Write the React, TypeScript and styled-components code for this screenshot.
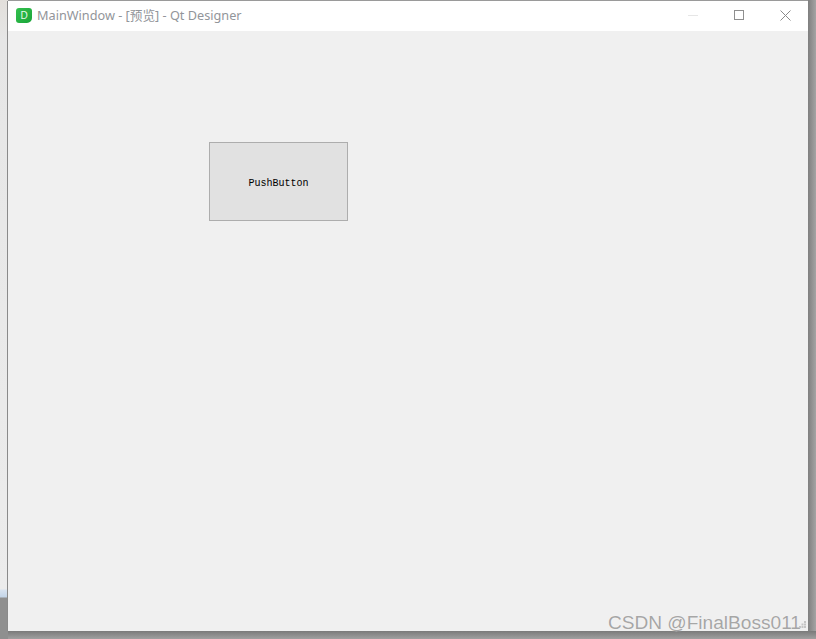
import React from 'react';
import styled, { createGlobalStyle } from 'styled-components';

const GlobalStyle = createGlobalStyle`
    html, body {
        margin: 0;
        padding: 0;
        width: 816px;
        height: 639px;
        overflow: hidden;
    }
`;

const Desktop = styled.div`
    position: relative;
    width: 816px;
    height: 639px;
    box-sizing: border-box;
    padding: 1px 8px 8px 8px;
    background: linear-gradient(
        to bottom,
        #e2dfdb 0,
        #e6e6e6 40px,
        #ececec 589px,
        #d8e3f0 590px,
        #c4d5e8 597px,
        #8f8f8f 598px,
        #8f8f8f 100%
    );
`;

const RightShade = styled.div`
    position: absolute;
    top: 0;
    right: 0;
    bottom: 0;
    width: 8px;
    background: linear-gradient(to right, #7f7f7f, #a4a4a4);
`;

const TopShade = styled.div`
    position: absolute;
    top: 0;
    left: 8px;
    right: 8px;
    height: 1px;
    background: #9a9a9a;
`;

const BottomShade = styled.div`
    position: absolute;
    left: 8px;
    right: 0;
    bottom: 0;
    height: 8px;
    background: linear-gradient(to bottom, #7a7a7a, #a0a0a0);
`;

const Window = styled.div`
    position: relative;
    z-index: 1;
    display: flex;
    flex-direction: column;
    width: 800px;
    height: 630px;
    background: #f0f0f0;
    box-shadow: -1px 0 0 #8a8a8a;
`;

const TitleBar = styled.div`
    display: flex;
    align-items: center;
    flex: 0 0 30px;
    padding-bottom: 2px;
    box-sizing: border-box;
    background: #ffffff;
`;

const AppIcon = styled.div`
    display: flex;
    align-items: center;
    justify-content: center;
    width: 16px;
    height: 15px;
    margin: 0 5px 0 8px;
    border-radius: 3px 3px 5px 3px;
    background: linear-gradient(135deg, #34c04e, #1aa53a);
    color: #e8f8ea;
    font: 10px "Liberation Sans", sans-serif;
`;

const Title = styled.div`
    flex: 1;
    margin-bottom: 1px;
    color: #92959a;
    font: 12.7px "Noto Sans", "Noto Sans CJK SC", sans-serif;
    white-space: nowrap;
`;

const Controls = styled.div`
    display: flex;
    align-items: center;
`;

const ControlButton = styled.div`
    display: flex;
    align-items: center;
    justify-content: center;
    width: 46px;
    height: 28px;
`;

const Content = styled.div`
    flex: 1;
    padding: 111px 0 0 201px;
`;

const PushButton = styled.button`
    display: flex;
    align-items: center;
    justify-content: center;
    width: 139px;
    height: 79px;
    box-sizing: border-box;
    padding: 3px 0 0;
    border: 1px solid #adadad;
    background: #e1e1e1;
    color: #000000;
    font: 10px "Liberation Mono", "DejaVu Sans Mono", monospace;
`;

const Watermark = styled.div`
    position: absolute;
    right: 7px;
    bottom: -3px;
    color: #a6a6a6;
    font: 19.1px "Liberation Sans", sans-serif;
    text-shadow: 0 0 1px #ffffff;
    white-space: nowrap;
`;

const SizeGrip = styled.svg`
    position: absolute;
    right: 2px;
    bottom: 3px;
`;

const App = () => {
    return (
        <Desktop>
            <GlobalStyle />
            <TopShade />
            <RightShade />
            <BottomShade />
            <Window>
                <TitleBar>
                    <AppIcon>D</AppIcon>
                    <Title>MainWindow - [预览] - Qt Designer</Title>
                    <Controls>
                        <ControlButton>
                            <svg width="10" height="1" viewBox="0 0 10 1">
                                <rect width="10" height="1" fill="#e6e6e6" />
                            </svg>
                        </ControlButton>
                        <ControlButton>
                            <svg width="10" height="10" viewBox="0 0 10 10">
                                <rect x="0.5" y="0.5" width="9" height="9" fill="none" stroke="#8f8f8f" />
                            </svg>
                        </ControlButton>
                        <ControlButton>
                            <svg width="11" height="11" viewBox="0 0 11 11">
                                <path d="M0.5 0.5 L10.5 10.5 M10.5 0.5 L0.5 10.5" stroke="#8a8a8a" fill="none" />
                            </svg>
                        </ControlButton>
                    </Controls>
                </TitleBar>
                <Content>
                    <PushButton>PushButton</PushButton>
                </Content>
                <Watermark>CSDN @FinalBoss011</Watermark>
                <SizeGrip width="7" height="7" viewBox="0 0 7 7">
                    <path d="M5 0h2v2h-2z M2.500 2.500h2v2h-2z M5 2.500h2v2h-2z M0 5h2v2h-2z M2.500 5h2v2h-2z M5 5h2v2h-2z" fill="#c4c4c4" />
                </SizeGrip>
            </Window>
        </Desktop>
    );
};

export default App;
